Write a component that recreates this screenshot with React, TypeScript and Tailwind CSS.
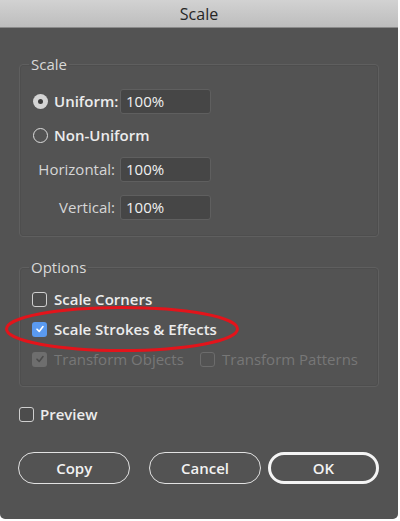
import React from "react";

const font = { fontFamily: '"Open Sans", "Noto Sans", sans-serif' };

function Radio({ checked }: { checked?: boolean }) {
  return checked ? (
    <span className="flex h-[15px] w-[15px] shrink-0 items-center justify-center rounded-full bg-[#d4d4d4]">
      <span className="h-[5px] w-[5px] rounded-full bg-[#3c3c3c]" />
    </span>
  ) : (
    <span className="h-[15px] w-[15px] shrink-0 rounded-full border-[1.5px] border-[#dcdcdc]" />
  );
}

function Check({ state }: { state: "off" | "on" | "disabledOn" | "disabledOff" }) {
  if (state === "on")
    return (
      <span className="flex h-[15px] w-[15px] shrink-0 items-center justify-center rounded-[3px] bg-[#5a9af0]">
        <svg width="10" height="10" viewBox="0 0 10 10">
          <path d="M2 5.2 L4.2 7.4 L8 2.6" fill="none" stroke="#ffffff" strokeWidth="1.6" strokeLinecap="round" strokeLinejoin="round" />
        </svg>
      </span>
    );
  if (state === "disabledOn")
    return (
      <span className="flex h-[15px] w-[15px] shrink-0 items-center justify-center rounded-[3px] bg-[#6e6e6e]">
        <svg width="10" height="10" viewBox="0 0 10 10">
          <path d="M2 5.2 L4.2 7.4 L8 2.6" fill="none" stroke="#4c4c4c" strokeWidth="1.6" strokeLinecap="round" strokeLinejoin="round" />
        </svg>
      </span>
    );
  if (state === "disabledOff")
    return <span className="h-[15px] w-[15px] shrink-0 rounded-[3px] border-[1.5px] border-[#6c6c6c]" />;
  return <span className="h-[15px] w-[15px] shrink-0 rounded-[3px] border-[1.5px] border-[#cfcfcf] bg-[#4c4c4c]" />;
}

function Field({ value }: { value: string }) {
  return (
    <div className="ml-[4px] flex h-[25px] w-[91px] items-center rounded-[3px] border border-[#5f5f5f] bg-[#464646] pl-[5px] text-[15px] text-[#f0f0f0]">
      {value}
    </div>
  );
}

export default function App() {
  return (
    <div className="h-[521px] w-[400px] bg-white" style={font}>
      <div className="relative flex h-[519px] w-[398px] flex-col overflow-hidden rounded-b-[5px] bg-[#535353]">
        <div className="flex h-[28px] shrink-0 items-center justify-center border-b border-[#8a8a8a] bg-gradient-to-b from-[#d2d2d2] to-[#bdbdbd] text-[16px] text-[#262626]">
          Scale
        </div>
        <div className="flex flex-col px-[19px] pt-[27px]">
          <fieldset className="m-0 rounded-[4px] border border-[#5f5f5f] px-[13px] pb-[16px] pt-[16px] shadow-[inset_0_0_0_1px_#4e4e4e]">
            <legend className="-ml-[4px] px-[2px] text-[15px] leading-[18px] text-[#d9d9d9]">Scale</legend>
            <div className="flex flex-col text-[15px] text-[#ececec]">
              <div className="flex h-[25px] items-center">
                <div className="flex w-[83px] items-center gap-[6px] font-semibold">
                  <Radio checked />
                  <span>Uniform:</span>
                </div>
                <Field value="100%" />
              </div>
              <div className="mt-[9px] flex h-[25px] items-center">
                <div className="flex items-center gap-[6px] font-semibold">
                  <Radio />
                  <span>Non-Uniform</span>
                </div>
              </div>
              <div className="mt-[9px] flex h-[25px] items-center">
                <div className="w-[83px] pr-[1px] text-right text-[#d6d6d6]">Horizontal:</div>
                <Field value="100%" />
              </div>
              <div className="mt-[13px] flex h-[25px] items-center">
                <div className="w-[83px] pr-[1px] text-right text-[#d6d6d6]">Vertical:</div>
                <Field value="100%" />
              </div>
            </div>
          </fieldset>

          <fieldset className="m-0 mt-[21px] rounded-[4px] border border-[#5f5f5f] pb-[17px] pl-[12px] pr-[12px] pt-[13px] shadow-[inset_0_0_0_1px_#4e4e4e]">
            <legend className="-ml-[3px] px-[2px] text-[15px] leading-[18px] text-[#d9d9d9]">Options</legend>
            <div className="flex flex-col text-[15px] font-semibold text-[#ececec]">
              <div className="flex h-[20px] items-center gap-[7px]">
                <Check state="off" />
                <span>Scale Corners</span>
              </div>
              <div className="mt-[10px] flex h-[20px] items-center gap-[7px]">
                <Check state="on" />
                <span>Scale Strokes &amp; Effects</span>
              </div>
              <div className="mt-[10px] flex h-[20px] items-center font-normal text-[#777777]">
                <div className="flex w-[168px] items-center gap-[7px]">
                  <Check state="disabledOn" />
                  <span>Transform Objects</span>
                </div>
                <div className="flex items-center gap-[7px]">
                  <Check state="disabledOff" />
                  <span>Transform Patterns</span>
                </div>
              </div>
            </div>
          </fieldset>

          <div className="mt-[17px] flex h-[20px] items-center gap-[6px] text-[15px] font-semibold text-[#ececec]">
            <Check state="off" />
            <span>Preview</span>
          </div>

          <div className="mt-[28px] flex -ml-px text-[15px] font-semibold text-[#f2f2f2]">
            <button className="flex h-[32px] w-[113px] items-center justify-center rounded-full border-[1.5px] border-[#e2e2e2] bg-[#535353]">
              Copy
            </button>
            <button className="ml-[19px] flex h-[32px] w-[112px] items-center justify-center rounded-full border-[1.5px] border-[#e2e2e2] bg-[#535353]">
              Cancel
            </button>
            <button className="ml-[7px] flex h-[32px] w-[112px] items-center justify-center rounded-full border-[3px] border-[#f4f4f4] bg-[#535353]">
              OK
            </button>
          </div>
        </div>

        <svg className="pointer-events-none absolute left-[4px] top-[305px]" width="236" height="48" viewBox="0 0 236 48">
          <ellipse cx="118" cy="24" rx="115.5" ry="21.5" fill="none" stroke="#e3141b" strokeWidth="3" />
        </svg>
      </div>
    </div>
  );
}
